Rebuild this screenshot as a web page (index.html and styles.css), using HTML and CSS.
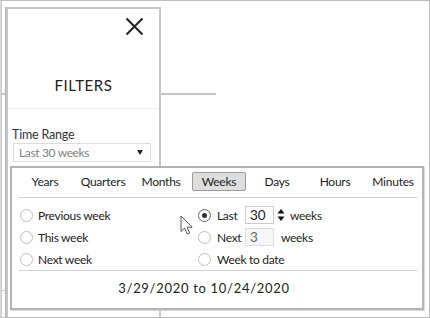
FILE: index.html
```html
<!DOCTYPE html>
<html>
<head>
<meta charset="utf-8">
<link rel="stylesheet" href="styles.css">
</head>
<body>
<div class="frame">
  <div class="panel">
    <div class="close-row">
      <svg class="close" width="19" height="19" viewBox="0 0 19 19"><path d="M1.5 1.5 L17.5 17.5 M17.5 1.5 L1.5 17.5" stroke="#222" stroke-width="2" fill="none"/></svg>
    </div>
    <div class="title">FILTERS</div>
    <div class="label">Time Range</div>
    <div class="select"><span>Last 30 weeks</span><span class="caret"></span></div>
  </div>

  <div class="popup">
    <div class="tabs">
      <div class="tab">Years</div>
      <div class="tab">Quarters</div>
      <div class="tab">Months</div>
      <div class="tab active">Weeks</div>
      <div class="tab">Days</div>
      <div class="tab">Hours</div>
      <div class="tab">Minutes</div>
    </div>
    <div class="sep"></div>
    <div class="options">
      <div class="col left">
        <div class="row"><span class="radio"></span><span>Previous week</span></div>
        <div class="row"><span class="radio"></span><span>This week</span></div>
        <div class="row"><span class="radio"></span><span>Next week</span></div>
      </div>
      <div class="col right">
        <div class="row"><span class="radio on"></span><span class="lbl">Last</span><span class="num">30</span>
          <svg class="spin" width="8" height="14" viewBox="0 0 8 14"><path d="M4 1 L7.5 5.5 L0.5 5.5 Z M4 13 L7.5 8.5 L0.5 8.5 Z" fill="#111"/></svg>
          <span class="unit">weeks</span></div>
        <div class="row"><span class="radio"></span><span class="lbl">Next</span><span class="num off">3</span><span class="unit2">weeks</span></div>
        <div class="row"><span class="radio"></span><span>Week to date</span></div>
      </div>
    </div>
    <div class="sep last"></div>
    <div class="daterange">3/29/2020 to 10/24/2020</div>
  </div>

  <svg class="cursor" width="14" height="21" viewBox="0 0 14 21"><path d="M1 1 L1 16.5 L4.6 13 L7.2 19 L9.6 18 L7.1 12.2 L12.2 12.2 Z" fill="#fff" stroke="#555" stroke-width="1" stroke-linejoin="round"/></svg>
</div>
</body>
</html>
```

FILE: styles.css
```css
html, body {
  margin: 0;
  padding: 0;
  background: #fff;
}
body {
  font-family: Lato, "Open Sans", sans-serif;
  color: #333;
}
.frame {
  position: relative;
  width: 430px;
  height: 318px;
  box-sizing: border-box;
  border: 1px solid #bdbdbd;
  border-left-color: #d6d6d6;
  overflow: hidden;
  background:
    linear-gradient(#c4c4c4, #c4c4c4) no-repeat 0 92px / 215px 2px,
    linear-gradient(#c8c8c8, #c8c8c8) no-repeat 0 289px / 6px 1px,
    linear-gradient(#d0d0d0, #d0d0d0) no-repeat 0 0 / 1px 100%,
    #fff;
}
.panel {
  margin: 6px 0 0 5px;
  width: 155px;
  height: 320px;
  box-sizing: border-box;
  border: 2px solid #c6c6c6;
  border-bottom: none;
  background: #fff;
  box-shadow: -1px 0 0 #b5b5b5;
}
.close-row {
  display: flex;
  justify-content: flex-end;
  padding: 8px 15px 0 0;
}
.close {
  display: block;
}
.title {
  margin-top: 40px;
  text-align: center;
  font-size: 15px;
  line-height: 18px;
  letter-spacing: 0.6px;
  color: #222;
  padding-bottom: 14px;
  border-bottom: 1px solid #eeeeee;
}
.label {
  margin-top: 18px;
  padding-left: 4px;
  font-size: 12.5px;
  letter-spacing: -0.2px;
  line-height: 16px;
  color: #333;
}
.select {
  margin: 0 0 0 5px;
  width: 138px;
  height: 19px;
  box-sizing: border-box;
  border: 1px solid #dcdcdc;
  display: flex;
  align-items: center;
  justify-content: space-between;
  padding: 0 7px 0 5px;
  font-size: 12px;
  letter-spacing: -0.35px;
  color: #808080;
}
.caret {
  width: 0;
  height: 0;
  border-left: 3.5px solid transparent;
  border-right: 3.5px solid transparent;
  border-top: 5px solid #222;
}
.popup {
  position: absolute;
  left: 9px;
  top: 165px;
  width: 414px;
  height: 144px;
  box-sizing: border-box;
  border: 2px solid #b3b3b3;
  background: #fff;
  box-shadow: 1px 1px 0 #dadada;
}
.tabs {
  display: grid;
  grid-template-columns: repeat(7, 58px);
  margin: 4px 0 0 4px;
  height: 19px;
}
.tab {
  font-size: 12px;
  letter-spacing: -0.25px;
  line-height: 19px;
  text-align: center;
  color: #222;
}
.tab.active {
  margin: 0 2px;
  background: #dedede;
  border: 1px solid #9a9a9a;
  border-radius: 2px;
  line-height: 17px;
}
.sep {
  margin: 6px 5px 0 7px;
  height: 0;
  border-top: 1px solid #cfcfcf;
}
.sep.last {
  margin-top: 0;
}
.options {
  display: flex;
  padding: 6px 0 0 8px;
}
.col.left {
  width: 178px;
}
.row {
  height: 22px;
  display: flex;
  align-items: center;
  font-size: 12px;
  letter-spacing: -0.3px;
  color: #222;
}
.radio {
  width: 13px;
  height: 13px;
  box-sizing: border-box;
  border: 1px solid #bdbdbd;
  border-radius: 50%;
  margin-right: 5px;
  flex: none;
  display: flex;
  align-items: center;
  justify-content: center;
}
.right .radio {
  margin-right: 6px;
}
.radio.on {
  border-color: #666;
}
.radio.on::after {
  content: "";
  width: 5px;
  height: 5px;
  border-radius: 50%;
  background: #333;
}
.lbl {
  width: 28px;
}
.num {
  width: 29px;
  height: 18px;
  box-sizing: border-box;
  border: 1px solid #cccccc;
  font-size: 13.5px;
  letter-spacing: 0;
  line-height: 16px;
  padding-left: 4px;
  color: #222;
}
.num.off {
  background: #f6f6f6;
  border-color: #dedede;
  color: #666;
}
.spin {
  margin-left: 3px;
}
.unit {
  margin-left: 5px;
}
.unit2 {
  margin-left: 7px;
}
.daterange {
  padding: 9px 26px 0 0;
  text-align: center;
  font-size: 13px;
  letter-spacing: 0.7px;
  line-height: 16px;
  color: #222;
}
.cursor {
  position: absolute;
  left: 179px;
  top: 214px;
}
```
